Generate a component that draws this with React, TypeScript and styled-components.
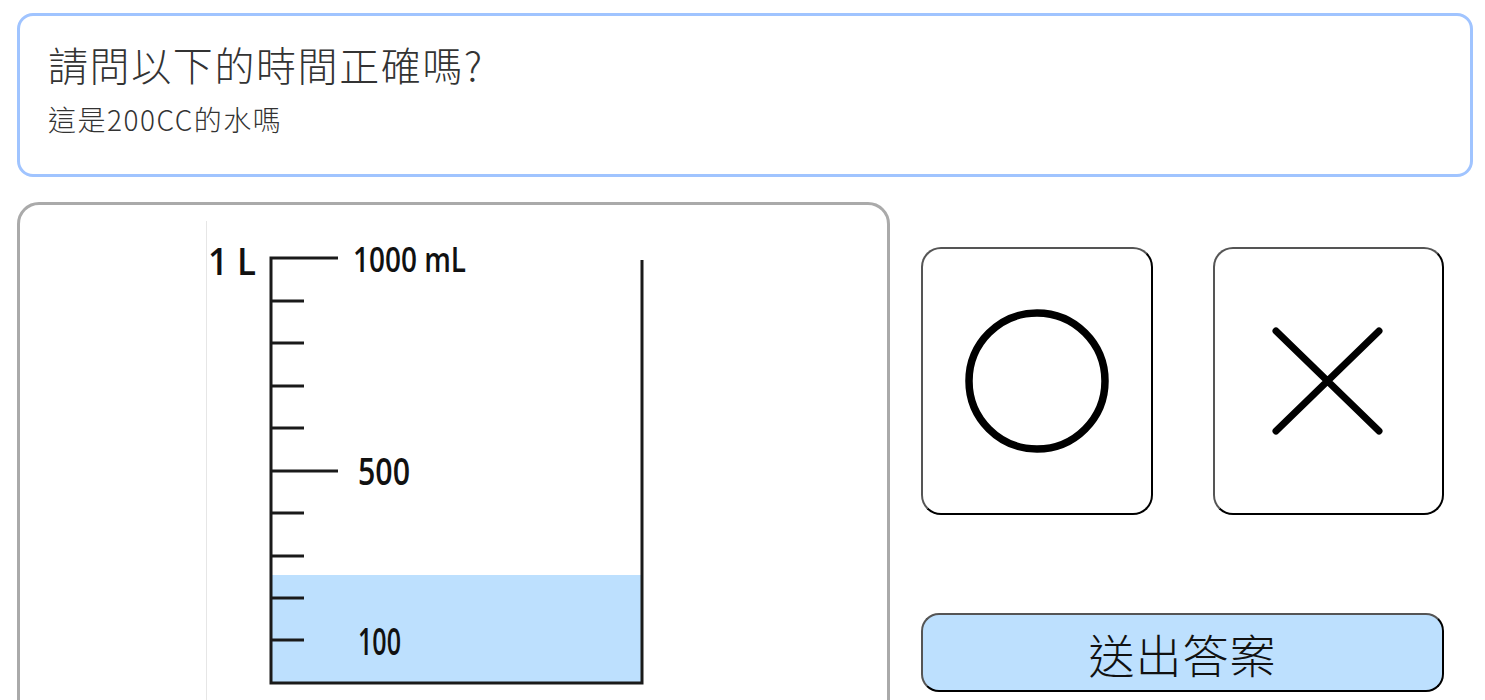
import React from 'react';
import styled, { createGlobalStyle } from 'styled-components';

const GlobalStyle = createGlobalStyle`
  html, body {
    margin: 0;
    padding: 0;
    background: #ffffff;
  }
  body {
    font-family: "Noto Sans CJK TC", "Noto Sans", sans-serif;
    color: #333333;
  }
`;

const Page = styled.main`
  padding: 13px 12px 0 17px;
  display: flex;
  flex-direction: column;
  gap: 25px;
`;

//question header card
const QuestionCard = styled.section`
  box-sizing: border-box;
  height: 164px;
  border: 3px solid #a0c4ff;
  border-radius: 16px;
  padding: 24px 28px;
`;

const Title = styled.h1`
  margin: 0;
  font-size: 40px;
  line-height: 48px;
  font-weight: 300;
  letter-spacing: 1.6px;
  color: #333333;
`;

const Subtitle = styled.p`
  margin: 15px 0 0;
  font-size: 28px;
  line-height: 32px;
  font-weight: 300;
  letter-spacing: 1.5px;
  color: #333333;
`;

const Row = styled.div`
  display: flex;
  gap: 31px;
  align-items: flex-start;
`;

const PictureCard = styled.div`
  box-sizing: border-box;
  width: 873px;
  height: 540px;
  border: 3px solid #aaaaaa;
  border-radius: 22px;
  display: flex;
  justify-content: center;
  padding-top: 16px;
`;

const AnswerColumn = styled.div`
  width: 523px;
  padding-top: 45px;
  display: flex;
  flex-direction: column;
`;

const Choices = styled.div`
  display: flex;
  gap: 60px;
`;

const ChoiceButton = styled.button`
  box-sizing: border-box;
  width: 232px;
  height: 268px;
  padding: 0;
  background: #ffffff;
  border: 2px solid;
  border-color: #555555 #000000 #000000 #555555;
  border-radius: 20px;
  display: flex;
  align-items: center;
  justify-content: center;
  cursor: pointer;
`;

const SubmitButton = styled.button`
  box-sizing: border-box;
  margin-top: 98px;
  height: 79px;
  width: 100%;
  background: #bde0fe;
  border: 2px solid;
  border-color: #555555 #000000 #000000 #555555;
  border-radius: 18px;
  font-family: "Noto Sans CJK TC", "Noto Sans", sans-serif;
  font-size: 46px;
  font-weight: 300;
  line-height: 1;
  letter-spacing: 1px;
  color: #111111;
  cursor: pointer;
`;

const Beaker = () => {
  const ticks = [80, 122, 165, 207, 292, 335, 377, 419];
  return (
    <svg width="495" height="480" viewBox="0 0 495 480">
      <line x1="0.5" y1="0" x2="0.5" y2="480" stroke="#e6e6e6" strokeWidth="1" />
      <rect x="65" y="354" width="371" height="108" fill="#bde0fe" />
      <g fontFamily='"Open Sans", "DejaVu Sans", sans-serif' fontWeight="600" fill="#111">
        <text x="2" y="54" fontSize="38" textLength="48" lengthAdjust="spacingAndGlyphs">1 L</text>
        <text x="147" y="51" fontSize="34" textLength="113" lengthAdjust="spacingAndGlyphs">1000 mL</text>
        <text x="152" y="264" fontSize="38" textLength="52" lengthAdjust="spacingAndGlyphs">500</text>
        <text x="152" y="434" fontSize="38" textLength="43" lengthAdjust="spacingAndGlyphs">100</text>
      </g>
      <g stroke="#1a1a1a" strokeWidth="3" fill="none">
        <polyline points="132,37 65,37 65,462 436,462 436,39" />
        <line x1="65" y1="250" x2="132" y2="250" />
        {ticks.map((y) => (
          <line key={y} x1="65" y1={y} x2="98" y2={y} />
        ))}
      </g>
    </svg>
  );
};

function App() {
  return (
    <>
      <GlobalStyle />
      <Page>
        <QuestionCard>
          <Title>請問以下的時間正確嗎?</Title>
          <Subtitle>這是200CC的水嗎</Subtitle>
        </QuestionCard>
        <Row>
          <PictureCard>
            <Beaker />
          </PictureCard>
          <AnswerColumn>
            <Choices>
              <ChoiceButton aria-label="O">
                <svg width="150" height="150" viewBox="0 0 150 150">
                  <circle cx="75" cy="75" r="68" fill="none" stroke="#000" strokeWidth="7.5" />
                </svg>
              </ChoiceButton>
              <ChoiceButton aria-label="X">
                <svg width="120" height="120" viewBox="0 0 120 120">
                  <path d="M8 10 L111 110 M111 10 L8 110" stroke="#000" strokeWidth="7" strokeLinecap="round" fill="none" />
                </svg>
              </ChoiceButton>
            </Choices>
            <SubmitButton>送出答案</SubmitButton>
          </AnswerColumn>
        </Row>
      </Page>
    </>
  );
}

export default App;
